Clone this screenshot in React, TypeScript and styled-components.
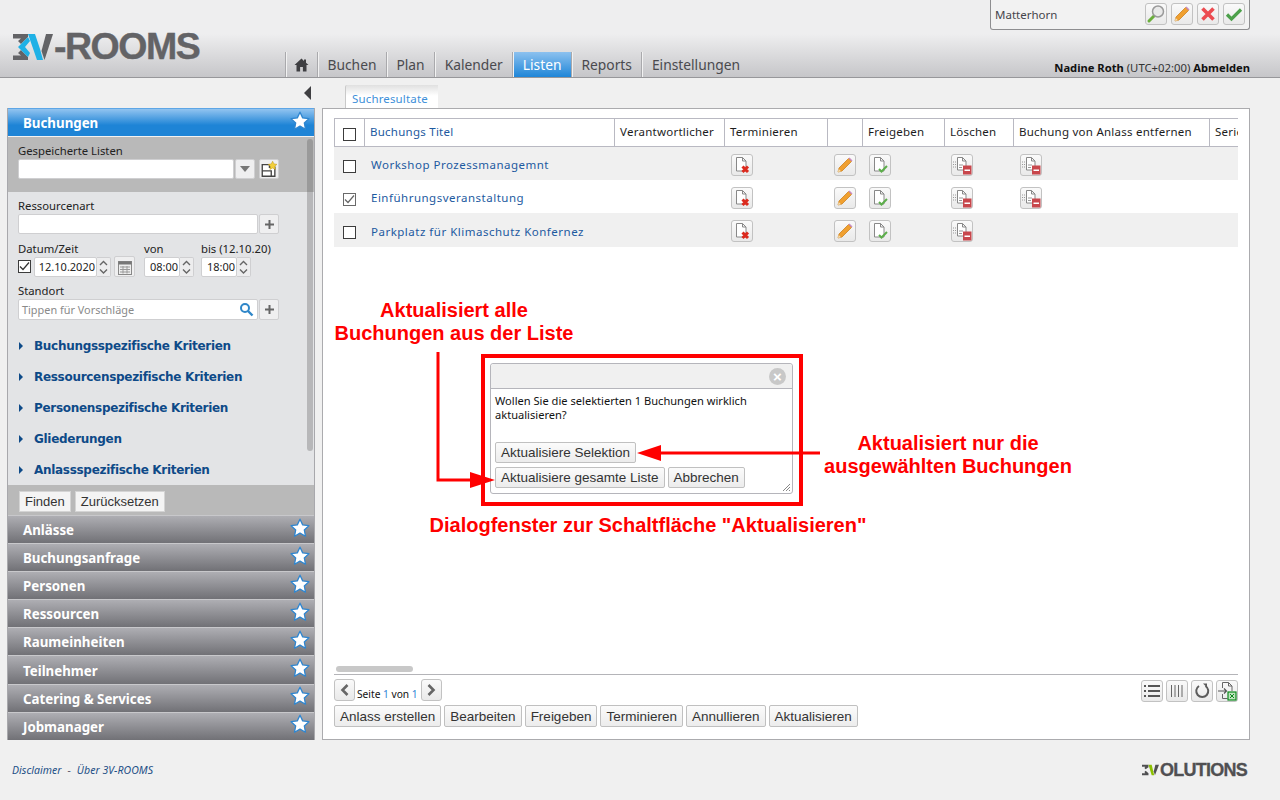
import React from "react";
import styled, { createGlobalStyle } from "styled-components";

const UI_FONT = `"Noto Sans", "Open Sans", sans-serif`;
const BTN_FONT = `"Liberation Sans", Arial, sans-serif`;

const GlobalStyle = createGlobalStyle`
  html, body { margin: 0; padding: 0; background: #f0f0f0; }
  body { font-family: ${UI_FONT}; font-size: 12px; color: #111; width: 1280px; height: 800px; overflow: hidden; }
  * { box-sizing: border-box; }
`;

const Page = styled.div`
  width: 1280px;
  height: 800px;
  display: flex;
  flex-direction: column;
`;

/* ---------- header ---------- */
const Header = styled.header`
  height: 78px;
  flex: none;
  display: flex;
  padding: 0 30px 0 13px;
  background: linear-gradient(#eeeeef 0, #eeeeef 34px, #c6c6c9 77px);
  border-bottom: 1px solid #97979a;
`;

const LogoBox = styled.div`
  width: 272px;
  flex: none;
  padding-top: 33px;
  display: flex;
  align-items: flex-start;
`;

const LogoText = styled.span`
  font-family: "Liberation Sans", sans-serif;
  font-weight: 700;
  font-size: 37.5px;
  line-height: 27px;
  letter-spacing: -1.5px;
  color: #636366;
  -webkit-text-stroke: 0.4px #636366;
`;

const Nav = styled.nav`
  display: flex;
  align-self: flex-end;
  height: 25px;
`;

const NavTab = styled.div<{ $active?: boolean; $icon?: boolean }>`
  display: flex;
  align-items: center;
  padding: 0 ${(p) => (p.$icon ? "8px" : p.$active ? "9.5px" : "9.5px")};
  font-size: 13.8px;
  color: ${(p) => (p.$active ? "#fff" : "#4a4a4e")};
  background: ${(p) => (p.$active ? "linear-gradient(#8cc1ef, #1f86d8)" : "transparent")};
  border-left: 1px solid #a9a9ac;
  box-shadow: inset 1px 0 0 #f2f2f2;
`;

const HeaderRight = styled.div`
  margin-left: auto;
  width: 260px;
  display: flex;
  flex-direction: column;
  justify-content: space-between;
  padding-bottom: 1px;
`;

const RoomBox = styled.div`
  height: 30px;
  display: flex;
  align-items: center;
  gap: 4px;
  padding: 0 4px 2px 4px;
  background: #f2f2f2;
  border: 1px solid #8e8e90;
  border-top: none;
  border-radius: 0 0 3px 3px;
`;

const RoomName = styled.span`
  flex: 1;
  padding-top: 2px;
  font-size: 11.5px;
  color: #45454c;
`;

const UserLine = styled.div`
  text-align: right;
  font-size: 11.2px;
  line-height: 16px;
  color: #111;
  white-space: nowrap;
  b { font-weight: 700; }
  span { font-size: 11.3px; color: #333; }
`;

const IconBtn = styled.span`
  width: 22px;
  height: 22px;
  flex: none;
  display: inline-flex;
  align-items: center;
  justify-content: center;
  background: linear-gradient(#fafafa, #e9e9e9);
  border: 1px solid #c2c2c2;
  border-radius: 3px;
`;

const PagerBtn = styled(IconBtn)`
  width: 21px;
`;

/* ---------- content ---------- */
const Content = styled.div`
  flex: none;
  display: flex;
  gap: 7px;
  padding-left: 7px;
`;

const LeftCol = styled.div`
  width: 308px;
  flex: none;
`;

const CollapseRow = styled.div`
  height: 30px;
  display: flex;
  justify-content: flex-end;
  align-items: flex-start;
  padding: 8px 4px 0 0;
`;

const Sidebar = styled.aside`
  position: relative;
  height: 632px;
  display: flex;
  flex-direction: column;
  background: #e3e4e6;
  border: 1px solid #a8a8ac;
  border-top: none;
`;

const AccHead = styled.div<{ $active?: boolean }>`
  flex: none;
  height: ${(p) => (p.$active ? "28px" : "28.1px")};
  display: flex;
  align-items: center;
  justify-content: space-between;
  padding: 1px 4px 0 15px;
  font-family: "Noto Sans", sans-serif;
  font-weight: 700;
  font-size: 13.3px;
  color: #fff;
  background: ${(p) =>
    p.$active ? "linear-gradient(#92c4f0, #1e84d6 60%)" : "linear-gradient(#aeaeb3, #717176)"};
  border-top: 1px solid ${(p) => (p.$active ? "#5ea6e6" : "#c8c8cb")};
  svg { margin-top: -5px; }
`;

const SavedSection = styled.div`
  height: 56px;
  flex: none;
  padding: 7px 10px 0;
  background: #b9b9b9;
  border-top: 1px solid #f2f2f2;
`;

const FormSection = styled.div`
  flex: none;
  height: 293px;
  padding: 7px 10px 0;
`;

const FieldLabel = styled.label`
  display: block;
  height: 15px;
  font-size: 11.3px;
  line-height: 13px;
  color: #222;
  white-space: nowrap;
`;

const FieldRow = styled.div`
  display: flex;
  align-items: center;
`;

const TextBox = styled.div<{ $w: number; $h?: number }>`
  width: ${(p) => p.$w}px;
  height: ${(p) => p.$h ?? 20}px;
  flex: none;
  display: flex;
  align-items: center;
  justify-content: space-between;
  padding: 0 3px;
  font-size: 11px;
  color: #222;
  background: #fff;
  border: 1px solid #cfcfd1;
  border-radius: 2px;
`;

const Placeholder = styled.span`
  font-size: 10.9px;
  color: #8a8a8a;
`;

const SideBtn = styled.span<{ $w?: number; $h?: number; $ml?: number }>`
  width: ${(p) => p.$w ?? 20}px;
  height: ${(p) => p.$h ?? 20}px;
  margin-left: ${(p) => p.$ml ?? 0}px;
  flex: none;
  display: inline-flex;
  align-items: center;
  justify-content: center;
  background: #efeff0;
  border: 1px solid #cfcfd1;
  border-radius: 2px;
`;

const DateLabels = styled.div`
  display: grid;
  grid-template-columns: 126px 57px auto;
  margin-top: 7px;
  label { line-height: 15px; }
`;

const DateInputs = styled.div`
  display: flex;
  align-items: center;
`;

const DateBox = styled(TextBox)<{ $ml?: number }>`
  justify-content: flex-end;
  padding: 0 1px 0 0;
  margin-left: ${(p) => p.$ml ?? 0}px;
`;

const Spin = styled.span<{ $mr?: number }>`
  width: 14px;
  height: 20px;
  flex: none;
  margin-right: ${(p) => p.$mr ?? 0}px;
  display: inline-flex;
  background: #ededee;
  border: 1px solid #cfcfd1;
  border-left: none;
  border-radius: 0 2px 2px 0;
`;

const CheckSquare = styled.span<{ $size?: number; $grey?: boolean }>`
  width: ${(p) => p.$size ?? 13}px;
  height: ${(p) => p.$size ?? 13}px;
  flex: none;
  display: inline-flex;
  align-items: center;
  justify-content: center;
  background: #fff;
  border: 1px solid ${(p) => (p.$grey ? "#6a6a6a" : "#3c3c3c")};
`;

const StandortLabel = styled(FieldLabel)`
  margin-top: 7px;
`;

const CriteriaList = styled.div`
  margin-top: 16px;
  display: flex;
  flex-direction: column;
  gap: 12px;
`;

const Criteria = styled.div`
  height: 19px;
  display: flex;
  align-items: center;
  gap: 11px;
  padding-left: 1px;
  font-family: "DejaVu Sans", sans-serif;
  font-weight: 700;
  font-size: 12px;
  letter-spacing: -0.3px;
  color: #0e4a88;
  &::before {
    content: "";
    border-left: 4px solid #0e4a88;
    border-top: 4px solid transparent;
    border-bottom: 4px solid transparent;
  }
`;

const SideScroll = styled.div`
  position: absolute;
  left: 299px;
  top: 31px;
  width: 6px;
  height: 312px;
  border-radius: 3px;
  background: rgba(90, 90, 90, 0.32);
`;

const SearchBar = styled.div`
  flex: none;
  height: 30px;
  display: flex;
  align-items: center;
  gap: 4px;
  padding: 2px 10px 0 11px;
  background: #b9b9b9;
`;

const PlainBtn = styled.span`
  height: 21px;
  padding: 0 5px;
  display: inline-flex;
  align-items: center;
  font-family: ${BTN_FONT};
  font-size: 13px;
  color: #333;
  background: #f4f4f4;
  border: 1px solid #d4d4d4;
`;

const RightCol = styled.div`
  width: 928px;
  flex: none;
`;

const TabRow = styled.div`
  height: 30px;
  display: flex;
  align-items: flex-end;
  padding-left: 23px;
`;

const Tab = styled.div`
  height: 24px;
  margin-bottom: -1px;
  position: relative;
  width: 93px;
  padding: 2px 0 0 6px;
  display: flex;
  align-items: center;
  font-size: 11.5px;
  letter-spacing: 0.15px;
  color: #3d8fd9;
  background: linear-gradient(#e0e0e0, #fff 45%);
  border-left: 1px solid #c9c9c9;
  border-radius: 2px 0 0 0;
`;

const Panel = styled.main`
  position: relative;
  height: 632px;
  display: flex;
  flex-direction: column;
  padding: 9px 11px 0;
  background: #fff;
  border: 1px solid #ababae;
`;

const COLS = "30px 250px 110px 103px 35px 82px 69px 196px 29px";

const GridHead = styled.div`
  height: 29px;
  display: grid;
  grid-template-columns: ${COLS};
  flex: none;
  overflow: hidden;
  border-top: 1px solid #b9b9c2;
  border-bottom: 1px solid #b9b9c2;
`;

const HeadCell = styled.div<{ $link?: boolean }>`
  display: flex;
  align-items: center;
  padding-left: 5px;
  padding-bottom: 2px;
  font-size: 11.5px;
  letter-spacing: 0.25px;
  white-space: nowrap;
  overflow: hidden;
  color: ${(p) => (p.$link ? "#1d5aa0" : "#1d1d1d")};
  border-left: 1px solid #b9b9c2;
  &:first-child {
    padding: 3px 0 0 8px;
  }
`;

const GridRow = styled.div<{ $alt?: boolean; $h: number }>`
  height: ${(p) => p.$h}px;
  padding-top: 2px;
  display: grid;
  grid-template-columns: ${COLS};
  align-items: center;
  background: ${(p) => (p.$alt ? "#f0f0f0" : "#fff")};
`;

const RowCell = styled.div`
  padding-left: 7px;
  display: flex;
  &:first-child {
    padding: 3px 0 0 9px;
  }
`;

const RowTitle = styled.a`
  font-size: 11.5px;
  letter-spacing: 0.5px;
  color: #1d5aa0;
  white-space: nowrap;
`;

const Spacer = styled.div`
  flex: 1;
`;

const HScroll = styled.div`
  width: 77px;
  height: 6px;
  margin: 0 0 2px 2px;
  border-radius: 3px;
  background: #c8c8c8;
`;

const PanelFoot = styled.div`
  flex: none;
  height: 65px;
  border-top: 1px solid #b4b4b8;
  display: flex;
  flex-direction: column;
  padding-top: 4px;
`;

const PagerRow = styled.div`
  height: 22px;
  display: flex;
  align-items: center;
`;

const PagerText = styled.span`
  margin: 8px 3px 0 2px;
  font-size: 10.2px;
  white-space: nowrap;
  i {
    font-style: normal;
    color: #2f85d6;
  }
`;

const ToolIcons = styled.div`
  margin-left: auto;
  display: flex;
  gap: 3px;
  margin-top: 1px;
`;

const ActionRow = styled.div`
  margin-top: 4px;
  display: flex;
  gap: 3px;
`;

const ActionBtn = styled.span`
  height: 22px;
  padding: 0 5px;
  display: inline-flex;
  align-items: center;
  font-family: ${BTN_FONT};
  font-size: 13.5px;
  color: #333;
  white-space: nowrap;
  background: linear-gradient(#fbfbfb, #ececec);
  border: 1px solid #c0c0c0;
  border-radius: 2px;
`;

/* ---------- annotation over the panel ---------- */
const RedFrame = styled.div`
  position: absolute;
  left: 158px;
  top: 245px;
  width: 322px;
  height: 152px;
  padding: 5px 6px 5px 5px;
  border: 4px solid #f00;
`;

const Dialog = styled.div`
  height: 131px;
  position: relative;
  display: flex;
  flex-direction: column;
  background: #fff;
  border: 1px solid #b5b5bb;
  border-radius: 3px;
`;

const DialogTitle = styled.div`
  height: 25px;
  flex: none;
  display: flex;
  align-items: center;
  justify-content: flex-end;
  padding-right: 6px;
  background: #f0f0f0;
  border-bottom: 1px solid #b5b5bb;
  border-radius: 3px 3px 0 0;
`;

const DialogClose = styled.span`
  width: 17px;
  height: 17px;
  border-radius: 50%;
  background: #c8c8c8;
  color: #fff;
  font-family: ${BTN_FONT};
  font-weight: 700;
  font-size: 15px;
  line-height: 17px;
  text-align: center;
`;

const DialogText = styled.div`
  height: 53px;
  padding: 5px 4px 0;
  font-size: 11.1px;
  line-height: 14px;
  color: #111;
`;

const DialogBtnRow = styled.div`
  display: flex;
  gap: 3px;
  padding-left: 4px;
  margin-bottom: 4px;
`;

const DialogBtn = styled(ActionBtn)`
  height: 21px;
`;

const Grip = styled.svg`
  position: absolute;
  right: 1px;
  bottom: 1px;
`;

const RedNote = styled.div<{ $left: number; $top: number; $w: number }>`
  position: absolute;
  left: ${(p) => p.$left}px;
  top: ${(p) => p.$top}px;
  width: ${(p) => p.$w}px;
  text-align: center;
  font-family: ${BTN_FONT};
  font-weight: 700;
  font-size: 20px;
  line-height: 23px;
  color: #f00;
`;

const ArrowLayer = styled.svg`
  position: absolute;
  left: -1px;
  top: -1px;
  pointer-events: none;
`;

/* ---------- footer ---------- */
const Footer = styled.footer`
  flex: 1;
  display: flex;
  align-items: flex-start;
  justify-content: space-between;
  padding: 23px 33px 0 12px;
`;

const FooterLinks = styled.div`
  font-size: 10.5px;
  font-style: italic;
  letter-spacing: 0.05px;
  color: #1d4f86;
  line-height: 14px;
  span { margin: 0 6px; color: #667; }
`;

const FootLogo = styled.div`
  display: flex;
  align-items: center;
  margin-top: -2px;
  gap: 1px;
  font-family: "Liberation Sans", sans-serif;
  font-weight: 700;
  font-size: 18px;
  line-height: 18px;
  letter-spacing: -0.75px;
  color: #505052;
  -webkit-text-stroke: 0.3px #505052;
`;

/* ---------- drawings ---------- */
const Star = () => (
  <svg width="20" height="20" viewBox="0 0 20 20">
    <path
      d="M10 1.200l2.700 5.700 6.200.8-4.600 4.300 1.200 6.200L10 15.100l-5.500 3.100 1.200-6.200L1.100 7.700l6.200-.8z"
      fill="#fff"
      stroke="#2f86d0"
      strokeWidth="1.300"
      strokeLinejoin="round"
    />
  </svg>
);

const Pencil = () => (
  <svg width="18" height="18" viewBox="0 0 18 18">
    <path d="M3 12L12.500 2.500l3 3L6 15l-4 1z" fill="#f0a030" stroke="#c97a12" strokeWidth=".7" />
    <path d="M12.500 2.500l1-1 3 3-1 1z" fill="#c98ac0" />
    <path d="M2 16l.7-3 2.300 2.300z" fill="#f3dfb8" />
  </svg>
);

const PageBase = () => (
  <path d="M3.500 1.500h6l3.500 3.500v10h-9.500zM9.500 1.500v3.500h3.500" fill="#fff" stroke="#888" strokeWidth="1" />
);

const FileX = () => (
  <svg width="18" height="18" viewBox="0 0 18 18">
    <PageBase />
    <path d="M9.500 10.500l5.500 5.500M15 10.500l-5.500 5.500" stroke="#dc2a1e" strokeWidth="3" />
  </svg>
);

const FileOk = () => (
  <svg width="18" height="18" viewBox="0 0 18 18">
    <PageBase />
    <path d="M8 13l2.500 2.500 5.500-5.500" fill="none" stroke="#5cae4a" strokeWidth="2" />
  </svg>
);

const FileMinus = () => (
  <svg width="20" height="20" viewBox="0 0 20 20">
    <path d="M5.500 2.500h5l3.500 3.500v9h-8.500zM10.500 2.500V6H14" fill="#fff" stroke="#888" />
    <path d="M1 7h1M3 7h1M1 9.500h1M3 9.500h1M1 12h1M3 12h1M7 10h4M7 12.500h3" stroke="#999" />
    <rect x="11" y="10.500" width="8.500" height="9" fill="#c8474c" />
    <rect x="12.500" y="14.500" width="5.500" height="1.500" fill="#fff" />
  </svg>
);

const Magnifier = () => (
  <svg width="20" height="20" viewBox="0 0 20 20">
    <path d="M9 11l-6 6" stroke="#6aae3c" strokeWidth="3" strokeLinecap="round" />
    <circle cx="12" cy="7.500" r="5.500" fill="#e9e9e9" stroke="#9a9a9a" strokeWidth="1.500" />
  </svg>
);

const RedX = () => (
  <svg width="16" height="16" viewBox="0 0 16 16">
    <path d="M2.500 2.500l11 11M13.500 2.500l-11 11" stroke="#ec4b50" strokeWidth="3.600" />
  </svg>
);

const GreenCheck = () => (
  <svg width="18" height="16" viewBox="0 0 18 16">
    <path d="M2 8.500l4.500 4.500L16 3.500" fill="none" stroke="#4ca04a" strokeWidth="3.200" />
  </svg>
);

const Home = () => (
  <svg width="15" height="14" viewBox="0 0 15 14">
    <path d="M7.500 0.500L0.500 7h2v6.500h3.600V9h2.800v4.500h3.600V7h2l-2.500-2.300V1.500h-2v1.400z" fill="#3f3f42" />
  </svg>
);

const SpinArrows = () => (
  <svg width="13" height="18" viewBox="0 0 13 18">
    <path d="M3 7l3.500-3.500L10 7M3 11.500l3.500 3.500 3.500-3.500" fill="none" stroke="#666" strokeWidth="1.400" />
  </svg>
);

const PlusGlyph = () => (
  <svg width="9" height="9" viewBox="0 0 9 9">
    <path d="M4.500 0v9M0 4.500h9" stroke="#666" strokeWidth="2" />
  </svg>
);

const Tick = ({ color = "#333" }: { color?: string }) => (
  <svg width="11" height="11" viewBox="0 0 11 11">
    <path d="M1 5.500l3 3 6-7" fill="none" stroke={color} strokeWidth="1.200" />
  </svg>
);

const SaveStar = () => (
  <svg width="19" height="19" viewBox="0 0 20 20">
    <path d="M2.500 4.500h8v3h6v10h-14z" fill="#fff" stroke="#444" strokeWidth="1.500" />
    <path d="M2.500 11.500h10v6" fill="none" stroke="#444" strokeWidth="1.500" />
    <path d="M14 .8l1.500 3 3.300.5-2.400 2.300.6 3.300-3-1.600-3 1.600.6-3.300-2.400-2.300 3.300-.5z" fill="#f2cf3a" stroke="#c39b17" strokeWidth=".6" />
  </svg>
);

const Calendar = () => (
  <svg width="14" height="16" viewBox="0 0 14 16">
    <rect x="0.500" y="2.500" width="13" height="13" fill="#eee" stroke="#888" />
    <rect x="0.500" y="2.500" width="13" height="3" fill="#777" />
    <path d="M2 8h10M2 10.500h10M2 13h10M5 7v7.500M9 7v7.500" stroke="#999" />
  </svg>
);

const Search = () => (
  <svg width="15" height="15" viewBox="0 0 15 15">
    <circle cx="6" cy="6" r="4" fill="none" stroke="#2f86c8" strokeWidth="2" />
    <path d="M9 9l4.500 4.500" stroke="#2f86c8" strokeWidth="2.400" />
  </svg>
);

const Chevron = ({ left }: { left?: boolean }) => (
  <svg width="12" height="14" viewBox="0 0 12 14">
    <path d={left ? "M8.500 2L3.500 7l5 5" : "M3.500 2l5 5-5 5"} fill="none" stroke="#666" strokeWidth="2.600" />
  </svg>
);

const ListIcon = () => (
  <svg width="18" height="14" viewBox="0 0 18 14">
    <path d="M1 2h2M1 7h2M1 12h2M5 2h12M5 7h12M5 12h12" stroke="#555" strokeWidth="2" />
  </svg>
);

const ColumnsIcon = () => (
  <svg width="14" height="16" viewBox="0 0 14 16">
    <path d="M1.500 2v12M5 2v12M8.500 2v12M12 2v12" stroke="#666" />
  </svg>
);

const RefreshIcon = () => (
  <svg width="16" height="16" viewBox="0 0 16 16">
    <path d="M5 3a6 6 0 1 0 6.500 0" fill="none" stroke="#5c5c5c" strokeWidth="2" />
    <path d="M9 .5h4v4z" fill="#5c5c5c" />
  </svg>
);

const ExportIcon = () => (
  <svg width="20" height="20" viewBox="0 0 20 20">
    <path d="M5.500 1.500h6l3.500 3.500v5M5.500 1.500V7M5.500 13v4.500h5M11.500 1.500V5H15" fill="none" stroke="#666" />
    <path d="M1 10h8M7 7.500L9.500 10 7 12.500" fill="none" stroke="#555" strokeWidth="1.200" />
    <rect x="11" y="11" width="8" height="8" fill="#bfe3bf" stroke="#0d8a1c" strokeWidth="1.200" />
    <path d="M13 13l4 4M17 13l-4 4" stroke="#0d8a1c" />
  </svg>
);

const LogoMark = () => (
  <svg width="41" height="28" viewBox="0 0 41 28">
    <path d="M0 1h15v3l-7 7-3-3 3-2.500H0zM5 20l3-3 7 7v3H0v-4.500h8z" fill="#636366" />
    <path d="M5 14L15 4l2 4-5 6 5 6-2 4z" fill="#1fb1e6" />
    <path d="M15 1h7l5 15 3 11h-6z" fill="#1fb1e6" />
    <path d="M33 1h7l-8.500 26-3-9z" fill="#636366" />
  </svg>
);

const SmallLogoMark = () => (
  <svg width="17" height="14" viewBox="0 0 21 14">
    <path d="M0 .5h8v3L4.500 6 3 4.500 4 3H0zM3 9.500 4.500 8 8 11v2.500H0V11h4z" fill="#505052" />
    <path d="M8 .5h4l3 13h-3z" fill="#8cc000" />
    <path d="M16.500 .5H21l-5 13-1.500-5z" fill="#505052" />
  </svg>
);

const accordion = ["Anlässe", "Buchungsanfrage", "Personen", "Ressourcen", "Raumeinheiten", "Teilnehmer", "Catering & Services", "Jobmanager"];
const criteria = ["Buchungsspezifische Kriterien", "Ressourcenspezifische Kriterien", "Personenspezifische Kriterien", "Gliederungen", "Anlassspezifische Kriterien"];
const columns = ["Verantwortlicher", "Terminieren", "", "Freigeben", "Löschen", "Buchung von Anlass entfernen", "Serie"];
const rows = [
  { title: "Workshop Prozessmanagemnt", alt: true, checked: false, detach: true, h: 33 },
  { title: "Einführungsveranstaltung", alt: false, checked: true, detach: true, h: 33 },
  { title: "Parkplatz für Klimaschutz Konfernez", alt: true, checked: false, detach: false, h: 34 },
];
const actions = ["Anlass erstellen", "Bearbeiten", "Freigeben", "Terminieren", "Annullieren", "Aktualisieren"];

export default function App() {
  return (
    <Page>
      <GlobalStyle />
      <Header>
        <LogoBox>
          <LogoMark />
          <LogoText>-ROOMS</LogoText>
        </LogoBox>
        <Nav>
          <NavTab $icon><Home /></NavTab>
          <NavTab>Buchen</NavTab>
          <NavTab>Plan</NavTab>
          <NavTab>Kalender</NavTab>
          <NavTab $active>Listen</NavTab>
          <NavTab>Reports</NavTab>
          <NavTab>Einstellungen</NavTab>
        </Nav>
        <HeaderRight>
          <RoomBox>
            <RoomName>Matterhorn</RoomName>
            <IconBtn><Magnifier /></IconBtn>
            <IconBtn><Pencil /></IconBtn>
            <IconBtn><RedX /></IconBtn>
            <IconBtn><GreenCheck /></IconBtn>
          </RoomBox>
          <UserLine><b>Nadine Roth</b> <span>(UTC+02:00)</span> <b>Abmelden</b></UserLine>
        </HeaderRight>
      </Header>

      <Content>
        <LeftCol>
          <CollapseRow>
            <svg width="7" height="14" viewBox="0 0 7 14"><path d="M7 0v14L0 7z" fill="#3f3f42" /></svg>
          </CollapseRow>
          <Sidebar>
            <AccHead $active>Buchungen<Star /></AccHead>
            <SavedSection>
              <FieldLabel>Gespeicherte Listen</FieldLabel>
              <FieldRow>
                <TextBox $w={216} />
                <SideBtn $ml={1}>
                  <svg width="10" height="6" viewBox="0 0 10 6"><path d="M0 0h10L5 6z" fill="#777" /></svg>
                </SideBtn>
                <SideBtn $ml={4}><SaveStar /></SideBtn>
              </FieldRow>
            </SavedSection>
            <FormSection>
              <FieldLabel>Ressourcenart</FieldLabel>
              <FieldRow>
                <TextBox $w={240} />
                <SideBtn $ml={1}><PlusGlyph /></SideBtn>
              </FieldRow>
              <DateLabels>
                <FieldLabel>Datum/Zeit</FieldLabel>
                <FieldLabel>von</FieldLabel>
                <FieldLabel>bis (12.10.20)</FieldLabel>
              </DateLabels>
              <DateInputs>
                <CheckSquare><Tick /></CheckSquare>
                <DateBox $w={63} $ml={3}>12.10.2020</DateBox>
                <Spin $mr={3}><SpinArrows /></Spin>
                <SideBtn $w={21} $h={21}><Calendar /></SideBtn>
                <DateBox $w={36} $ml={9}>08:00</DateBox>
                <Spin $mr={7}><SpinArrows /></Spin>
                <DateBox $w={36}>18:00</DateBox>
                <Spin><SpinArrows /></Spin>
              </DateInputs>
              <StandortLabel>Standort</StandortLabel>
              <FieldRow>
                <TextBox $w={240} $h={21}>
                  <Placeholder>Tippen für Vorschläge</Placeholder>
                  <Search />
                </TextBox>
                <SideBtn $ml={1} $h={21}><PlusGlyph /></SideBtn>
              </FieldRow>
              <CriteriaList>
                {criteria.map((c) => (
                  <Criteria key={c}>{c}</Criteria>
                ))}
              </CriteriaList>
            </FormSection>
            <SearchBar>
              <PlainBtn>Finden</PlainBtn>
              <PlainBtn>Zurücksetzen</PlainBtn>
            </SearchBar>
            {accordion.map((a) => (
              <AccHead key={a}>{a}<Star /></AccHead>
            ))}
            <SideScroll />
          </Sidebar>
        </LeftCol>

        <RightCol>
          <TabRow>
            <Tab>Suchresultate</Tab>
          </TabRow>
          <Panel>
            <GridHead>
              <HeadCell><CheckSquare /></HeadCell>
              <HeadCell $link>Buchungs Titel</HeadCell>
              {columns.map((c, i) => (
                <HeadCell key={i}>{c}</HeadCell>
              ))}
            </GridHead>
            {rows.map((r) => (
              <GridRow key={r.title} $alt={r.alt} $h={r.h}>
                <RowCell>
                  <CheckSquare $grey={r.checked}>{r.checked && <Tick color="#666" />}</CheckSquare>
                </RowCell>
                <RowCell><RowTitle>{r.title}</RowTitle></RowCell>
                <RowCell />
                <RowCell><IconBtn><FileX /></IconBtn></RowCell>
                <RowCell><IconBtn><Pencil /></IconBtn></RowCell>
                <RowCell><IconBtn><FileOk /></IconBtn></RowCell>
                <RowCell><IconBtn><FileMinus /></IconBtn></RowCell>
                <RowCell>{r.detach && <IconBtn><FileMinus /></IconBtn>}</RowCell>
                <RowCell />
              </GridRow>
            ))}
            <Spacer />
            <HScroll />
            <PanelFoot>
              <PagerRow>
                <PagerBtn><Chevron left /></PagerBtn>
                <PagerText>Seite <i>1</i> von <i>1</i></PagerText>
                <PagerBtn><Chevron /></PagerBtn>
                <ToolIcons>
                  <IconBtn><ListIcon /></IconBtn>
                  <IconBtn><ColumnsIcon /></IconBtn>
                  <IconBtn><RefreshIcon /></IconBtn>
                  <IconBtn><ExportIcon /></IconBtn>
                </ToolIcons>
              </PagerRow>
              <ActionRow>
                {actions.map((a) => (
                  <ActionBtn key={a}>{a}</ActionBtn>
                ))}
              </ActionRow>
            </PanelFoot>

            <RedNote $left={-1} $top={190} $w={264}>Aktualisiert alle<br />Buchungen aus der Liste</RedNote>
            <RedFrame>
              <Dialog>
                <DialogTitle><DialogClose>×</DialogClose></DialogTitle>
                <DialogText>Wollen Sie die selektierten 1 Buchungen wirklich aktualisieren?</DialogText>
                <DialogBtnRow>
                  <DialogBtn>Aktualisiere Selektion</DialogBtn>
                </DialogBtnRow>
                <DialogBtnRow>
                  <DialogBtn>Aktualisiere gesamte Liste</DialogBtn>
                  <DialogBtn>Abbrechen</DialogBtn>
                </DialogBtnRow>
                <Grip width="10" height="10" viewBox="0 0 10 10">
                  <path d="M9 2L2 9M9 5L5 9M9 8L8 9" stroke="#888" />
                </Grip>
              </Dialog>
            </RedFrame>
            <RedNote $left={474} $top={323} $w={302}>Aktualisiert nur die<br />ausgewählten Buchungen</RedNote>
            <RedNote $left={75} $top={405} $w={500}>Dialogfenster zur Schaltfläche "Aktualisieren"</RedNote>
            <ArrowLayer width="928" height="632" viewBox="322 108 928 632">
              <path d="M438 352V480H472" fill="none" stroke="#f00" strokeWidth="3" />
              <path d="M495 480l-25-8v16z" fill="#f00" />
              <path d="M820 453H658" fill="none" stroke="#f00" strokeWidth="3" />
              <path d="M637 453l24-8v16z" fill="#f00" />
            </ArrowLayer>
          </Panel>
        </RightCol>
      </Content>

      <Footer>
        <FooterLinks>Disclaimer<span>-</span>Über 3V-ROOMS</FooterLinks>
        <FootLogo><SmallLogoMark />OLUTIONS</FootLogo>
      </Footer>
    </Page>
  );
}
